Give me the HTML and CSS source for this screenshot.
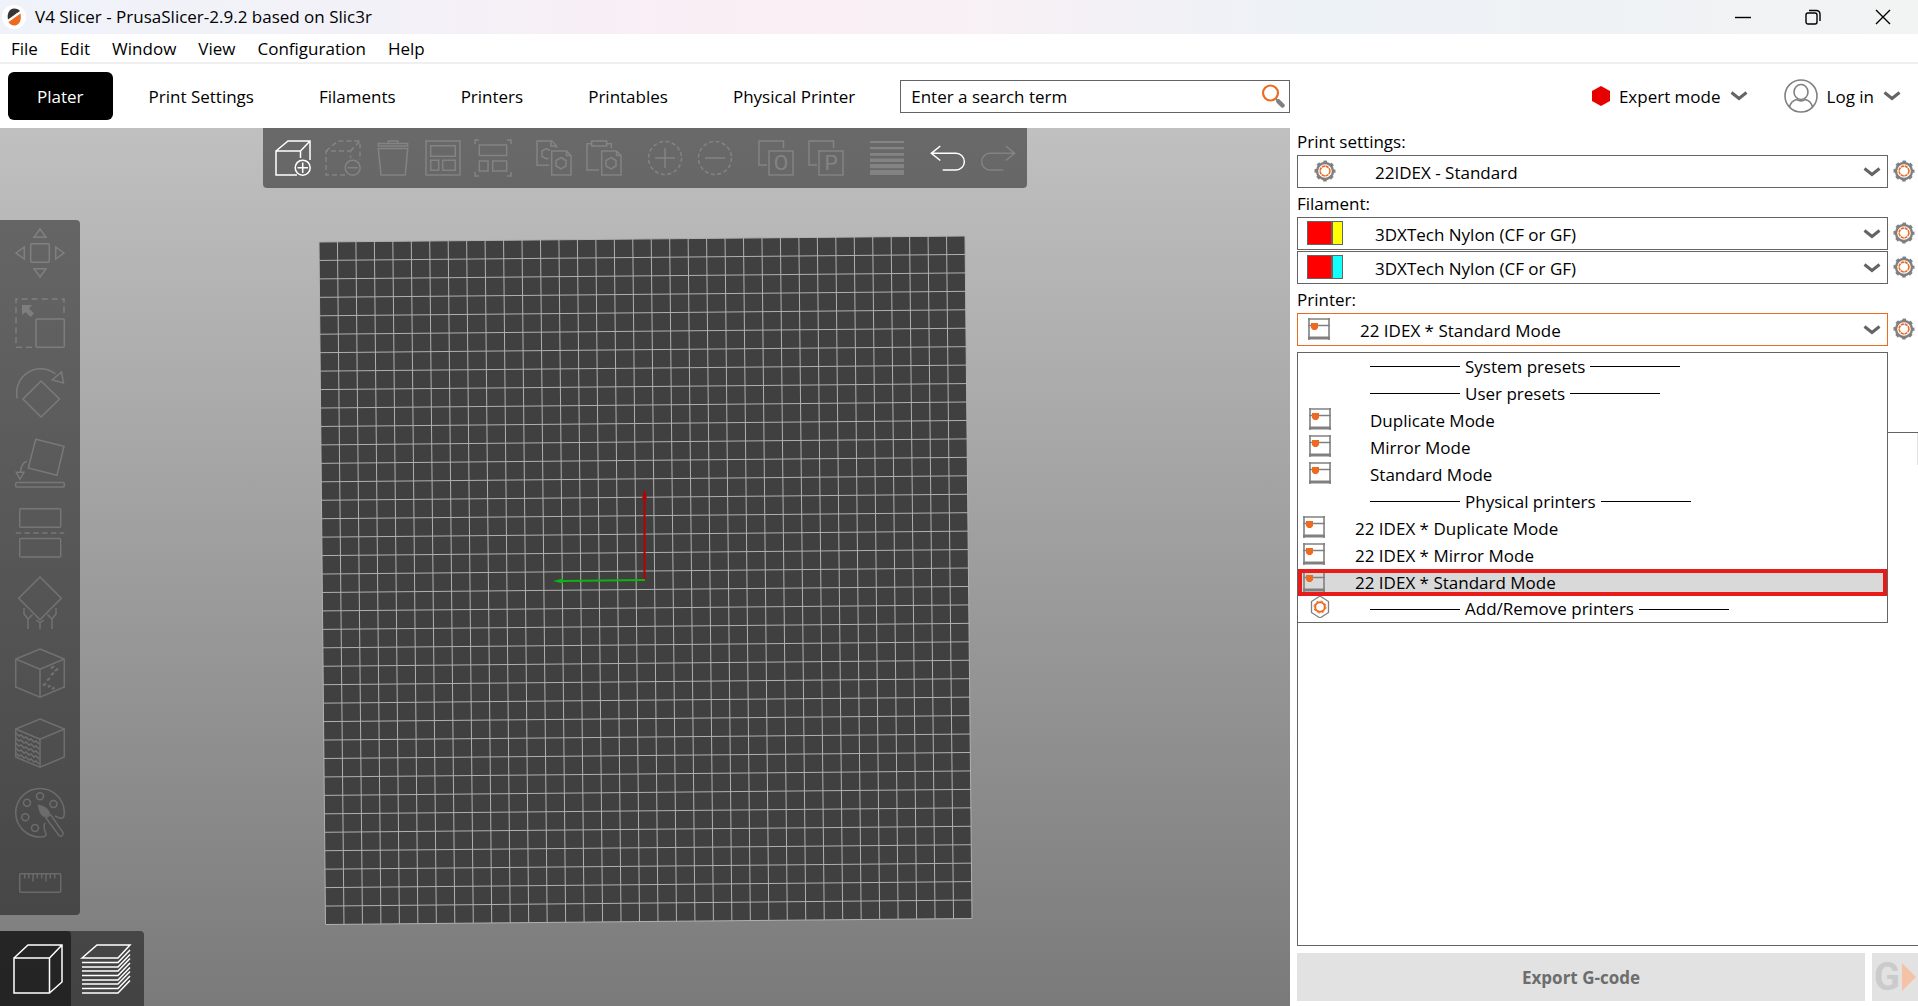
FILE: index.html
```html
<!DOCTYPE html>
<html lang="en">
<head>
    <meta charset="UTF-8">
    <meta name="viewport" content="width=device-width, initial-scale=1.0">
    <title>V4 Slicer - PrusaSlicer-2.9.2 based on Slic3r</title>
    <link rel="stylesheet" href="styles.css">
</head>
<body>
    <!-- shared icons -->
    <svg class="defs" width="0" height="0" aria-hidden="true">
        <symbol id="chevron" viewBox="0 0 18 10">
            <path d="M1.5 1.5L9 7.5L16.5 1.5" fill="none" stroke="#646464" stroke-width="3"/>
        </symbol>
        <symbol id="gear" viewBox="0 0 22 22">
            <circle cx="11" cy="11" r="8" fill="none" stroke="#808080" stroke-width="2.4"/>
            <circle cx="11" cy="11" r="9.3" fill="none" stroke="#808080" stroke-width="2.4" stroke-dasharray="3.6 3.7" stroke-dashoffset="1.8"/>
            <circle cx="11" cy="11" r="4.9" fill="none" stroke="#ed6b21" stroke-width="1.6" stroke-dasharray="3.2 .65"/>
        </symbol>
        <symbol id="printer" viewBox="0 0 22 22">
            <path d="M1 0V22M21 0V22M0 1H22M0 7.5H22" fill="none" stroke="#808080" stroke-width="1.6"/>
            <path d="M0 20H22" stroke="#808080" stroke-width="3"/>
            <path d="M3 5H10V10L8 12H5L3 10Z" fill="#ed6b21"/>
        </symbol>
        <symbol id="hexgear" viewBox="0 0 20 22">
            <path d="M10 0L18.500 5.500V16.500L10 22L1.500 16.500V5.500Z" fill="none" stroke="#808080" stroke-width="1.300"/>
            <circle cx="10" cy="11" r="4.8" fill="none" stroke="#ed6b21" stroke-width="2"/>
            <circle cx="10" cy="11" r="6" fill="none" stroke="#ed6b21" stroke-width="1" stroke-dasharray="2.300 2.400"/>
        </symbol>
    </svg>

    <header class="title-bar">
        <svg class="app-icon" viewBox="0 0 24 24">
            <circle cx="12" cy="12" r="12" fill="#fff"/>
            <path d="M6 14.500C4.500 8 8 3.500 12 3.500C15 3.500 17 4.500 18 6Z" fill="#363636"/>
            <path d="M18.500 8.500C20 15 17 20.500 12.500 20.500C9.500 20.500 7.500 19 6.500 17Z" fill="#ed6b21"/>
            <path d="M9 15L15.500 8" stroke="#fff" stroke-width="1"/>
        </svg>
        <h1>V4 Slicer - PrusaSlicer-2.9.2 based on Slic3r</h1>
        <div class="window-buttons">
            <button aria-label="Minimize"><svg viewBox="0 0 16 16"><path d="M0 8.500H16"/></svg></button>
            <button aria-label="Restore"><svg viewBox="0 0 16 16"><rect x="1" y="4" width="11" height="11" rx="2"/><path d="M4 1.500H11.500A3.500 3.500 0 0 1 15 5V12"/></svg></button>
            <button aria-label="Close"><svg viewBox="0 0 16 16"><path d="M1 1L15 15M15 1L1 15"/></svg></button>
        </div>
    </header>

    <nav class="menu-bar">
        <button>File</button>
        <button>Edit</button>
        <button>Window</button>
        <button>View</button>
        <button>Configuration</button>
        <button>Help</button>
    </nav>

    <div class="top-bar">
        <div class="top-left">
            <nav class="tabs">
                <button class="active">Plater</button>
                <button>Print Settings</button>
                <button>Filaments</button>
                <button>Printers</button>
                <button>Printables</button>
                <button>Physical Printer</button>
            </nav>
            <div class="search">
                <input type="text" aria-label="Search" placeholder="Enter a search term">
                <svg viewBox="0 0 24 26">
                    <circle cx="9.500" cy="10" r="7.500" fill="none" stroke="#ed6b21" stroke-width="2.200"/>
                    <path d="M15 16L17.500 18.500" stroke="#808080" stroke-width="2"/>
                    <path d="M17.500 18.500L21.500 22.500" stroke="#808080" stroke-width="4.500" stroke-linecap="round"/>
                </svg>
            </div>
        </div>
        <div class="top-right">
            <button class="mode">
                <svg class="hexagon" viewBox="0 0 18 20"><path d="M9 0L18 5V15L9 20L0 15V5Z" fill="#e70000"/></svg>
                <span>Expert mode</span>
                <svg class="chevron"><use href="#chevron"/></svg>
            </button>
            <button class="login">
                <svg class="user" viewBox="0 0 34 34" fill="none" stroke="#808080" stroke-width="1.600">
                    <circle cx="17" cy="17" r="16"/>
                    <ellipse cx="17" cy="13" rx="7" ry="7.500"/>
                    <path d="M5.500 28C6.500 23.500 9.500 21.500 12.500 20.500C15 22 19 22 21.500 20.500C24.500 21.500 27.500 23.500 28.500 28"/>
                </svg>
                <span>Log in</span>
                <svg class="chevron"><use href="#chevron"/></svg>
            </button>
        </div>
    </div>

    <main>
        <section class="viewport">
            <svg class="bed" viewBox="0 0 1290 878">
                <path d="M319 114L965 108L972 790.500L325.500 796.500Z" fill="#404040"/>
                <g id="grid" stroke="#b0b0b0" stroke-width="1"></g>
                <path d="M644.500 452V370" stroke="#b80000" stroke-width="2"/>
                <path d="M644.500 361L647 371H642Z" fill="#b80000"/>
                <path d="M645 452L562 453" stroke="#0fb40f" stroke-width="2"/>
                <path d="M553 453L563 450.500V455.500Z" fill="#0fb40f"/>
            </svg>

            <div class="toolbar">
                <div class="group">
                    <button class="on" aria-label="Add"><svg viewBox="0 0 36 36"><path d="M22 35H1V11H25.500V18M1 11L13 1H35V20M25.500 11L35 1"/><circle cx="27.700" cy="27.700" r="7.500"/><path d="M22.500 27.700H33M27.700 22.500V33"/></svg></button>
                    <button aria-label="Delete"><svg viewBox="0 0 36 36"><path stroke-dasharray="5 3" d="M20 35H1V11H25.500V18M1 11L13 1H35V20M25.500 11L35 1"/><circle cx="27.700" cy="27.700" r="7.500"/><path d="M22.500 27.700H33"/></svg></button>
                    <button aria-label="Delete all"><svg viewBox="0 0 36 36"><path d="M3.300 3.500H32.700V6H3.300ZM13.300 3.500V1H22.700V3.500M3.300 8.500H32.700L30.300 35H6Z"/></svg></button>
                    <button aria-label="Arrange"><svg viewBox="0 0 36 36"><path d="M1 1H35V35H1ZM5.700 5.700H30.300V16.300H5.700ZM5.700 20.300H13.700V30.300H5.700ZM17.700 20.300H30.300V30.300H17.700Z"/></svg></button>
                    <button aria-label="Arrange bed"><svg viewBox="0 0 36 36"><path d="M0 4V0H4M32 0H36V4M36 32V36H32M4 36H0V32M4.300 5H31.700V15.500H4.300ZM4.300 21H13V31H4.300ZM17.700 21H31.700V31H17.700Z"/></svg></button>
                </div>
                <div class="group">
                    <button aria-label="Copy"><svg viewBox="0 0 36 36"><path d="M13 25.300H1V1H16L20.500 6V8M15 1V6H20M12.500 18L10.500 19L6 16.500V11L10.500 8.500L14 10.500M15.700 11H30.500L35 15.500V35H15.700ZM30.500 11V15.500H35M25 17.500L30 20.500V26L25 29L20 26V20.500Z"/></svg></button>
                    <button aria-label="Paste"><svg viewBox="0 0 36 36"><path d="M13 30H1V3.700H5.700M20.700 3.700H25.300V8M5.700 1H20.700V6H5.700ZM15.700 11H30.500L35 15.500V35H15.700ZM30.500 11V15.500H35M25 17.500L30 20.500V26L25 29L20 26V20.500Z"/></svg></button>
                </div>
                <div class="group">
                    <button aria-label="Add instance"><svg viewBox="0 0 36 36"><circle cx="18" cy="18" r="16.500" stroke-dasharray="4 2.480"/><path d="M8 18H28M18 8V28"/></svg></button>
                    <button aria-label="Remove instance"><svg viewBox="0 0 36 36"><circle cx="18" cy="18" r="16.500" stroke-dasharray="4 2.480"/><path d="M8 18H28"/></svg></button>
                </div>
                <div class="group">
                    <button aria-label="Split to objects"><svg viewBox="0 0 36 36"><path d="M9 25H1V1H25.500V8M11 11H35V35H11Z"/><text x="23" y="30">O</text></svg></button>
                    <button aria-label="Split to parts"><svg viewBox="0 0 36 36"><path d="M9 25H1V1H25.500V8M11 11H35V35H11Z"/><text x="23" y="30">P</text></svg></button>
                </div>
                <div class="group">
                    <button aria-label="Variable layer height"><svg viewBox="0 0 36 36"><path class="solid" d="M1 1H35V3H1ZM1 7H35V9.300H1ZM1 13H35V15.700H1ZM1 18.500H35V22H1ZM1 24H35V28.300H1ZM1 30H35V35H1Z"/></svg></button>
                </div>
                <div class="group">
                    <button class="on" aria-label="Undo"><svg viewBox="0 0 36 36"><path d="M10.300 6L1.300 13.300L10.300 20.500M1.300 13.300H26A8.300 8.300 0 0 1 26 30H12.700"/></svg></button>
                    <button aria-label="Redo"><svg viewBox="0 0 36 36"><path d="M25.700 6L34.700 13.300L25.700 20.500M34.700 13.300H10A8.300 8.300 0 0 0 10 30H23.300"/></svg></button>
                </div>
            </div>

            <div class="gizmos">
                <button aria-label="Move"><svg viewBox="0 0 50 50"><rect x="15.700" y="15.700" width="18.600" height="18.600" rx="1"/><path d="M25 1L31 9.300H19ZM25 49L31 40.700H19ZM1 25L9.300 19V31ZM49 25L40.700 19V31Z"/></svg></button>
                <button aria-label="Scale"><svg viewBox="0 0 50 50"><path stroke-dasharray="6 4" d="M17 49.300H1V1H49V18"/><rect x="21" y="21" width="28.300" height="28.300" rx="1"/><path class="solid" d="M7 7H17L14 10.500L19 15.500L15.500 19L10.500 14L7 17Z"/></svg></button>
                <button aria-label="Rotate"><svg viewBox="0 0 50 50"><path d="M2.300 30.500A24 24 0 0 1 40.500 6M46.500 4L37.300 12L48.500 15ZM26 13L44.500 31L26 49L8 31Z"/></svg></button>
                <button aria-label="Place on face"><svg viewBox="0 0 50 50"><path d="M20.700 1.300L49 8.300L42 37.300L13.300 30ZM11.700 23.300C8 24.500 6 28 5.500 34M1.300 34.300H9L5 41.300Z"/><rect x=".7" y="44.500" width="48.600" height="4.500" rx="1"/></svg></button>
                <button aria-label="Cut"><svg viewBox="0 0 50 50"><rect x="4.700" y=".7" width="41" height="18.600" rx="1"/><rect x="4.700" y="30.500" width="41" height="18.600" rx="1"/><path stroke-dasharray="5.500 3.300" d="M.7 25H49.300"/></svg></button>
                <button aria-label="Paint-on supports"><svg viewBox="0 0 50 50"><path d="M25 -1L46.300 20.300L25 41.700L3.700 20.300ZM13 51V41L9 36V30M13 41L17.500 36.500M37 51V41L41 36V30M37 41L32.500 36.500M25 51V45L21.500 42M25 45L28.500 42"/></svg></button>
                <button aria-label="Seam painting"><svg viewBox="0 0 50 50"><path d="M25 1L49.300 11V39L25 49.300L.7 39V11ZM.7 11L25 21.300L49.300 11M25 21.300V49"/><path stroke-width="2.200" d="M36 20.500L39 18M40 23L43 20.500M36 27L39 25M32 32.500L35 30M28 37.500L31 35.500M33 39L35.500 37.500M37 41L39.500 39.500"/></svg></button>
                <button aria-label="Fuzzy skin"><svg viewBox="0 0 50 50"><path d="M25 1L49.300 11V39L25 49.300L.7 39V11ZM.7 11L25 21.300L49.300 11M25 21.300V49"/><path d="M1 15l3 3l2-1l3 3l2-1l3 3l2-1l3 3l2-1l3 3M1 20l3 3l2-1l3 3l2-1l3 3l2-1l3 3l2-1l3 3M1 25l3 3l2-1l3 3l2-1l3 3l2-1l3 3l2-1l3 3M1 30l3 3l2-1l3 3l2-1l3 3l2-1l3 3l2-1l3 3M1 35l3 3l2-1l3 3l2-1l3 3l2-1l3 3l2-1l3 3"/></svg></button>
                <button aria-label="Multimaterial painting"><svg viewBox="0 0 50 50"><path d="M30 35C27 39 31 44 31 46.500C31 48.500 28 49 25 49A24.300 24.300 0 1 1 49.300 25C49.300 32 46 31 40 28"/><circle cx="25" cy="8.300" r="3.500"/><circle cx="12" cy="14.700" r="3.500"/><circle cx="38.500" cy="16" r="3.500"/><circle cx="10.300" cy="29.300" r="3.500"/><circle cx="20" cy="40" r="3.500"/><path class="solid" d="M22.700 16.500C29 18 34 20 35 26L30.500 29.500C25 28 24 23 22.700 16.500Z"/><path d="M31 30L35.500 26.500L48 44.500C49 47 46 49.500 44 47.500Z"/></svg></button>
                <button aria-label="Measure"><svg viewBox="0 0 50 50"><rect x="4.700" y="15.700" width="41" height="18.600" rx="1"/><path d="M9.700 16V20.500M13.700 16V20.500M18 16V23.500M22.300 16V20.500M26.700 16V20.500M31 16V23.500M35.300 16V20.500M39.700 16V20.500"/></svg></button>
            </div>

            <div class="view-switch">
                <button class="active" aria-label="3D editor view"><svg viewBox="0 0 50 50"><path d="M1 14H36.500V49H1ZM1 14L15 1H49V38L36.500 49M36.500 14L49 1"/></svg></button>
                <button aria-label="Preview"><svg viewBox="0 0 50 50"><path d="M1 14L16 1H49L37 14ZM1 18.500H37L49 6M1 23H37L49 10.500M1 27H37L49 14.500M1 31.500H37L49 19M1 36H37L49 23.500M1 40H37L49 27.500M1 44.500H37L49 32M1 49H37L49 36.500"/></svg></button>
            </div>
        </section>

        <aside class="sidebar">
            <label for="print">Print settings:</label>
            <div class="preset">
                <div class="combo">
                    <span class="combo-icon centered"><svg class="gear"><use href="#gear"/></svg></span>
                    <select id="print"><option>22IDEX - Standard</option></select>
                    <svg class="chevron"><use href="#chevron"/></svg>
                </div>
                <button class="edit" aria-label="Edit print settings"><svg class="gear"><use href="#gear"/></svg></button>
            </div>

            <label for="filament1">Filament:</label>
            <div class="preset">
                <div class="combo">
                    <span class="combo-icon"><span class="swatch yellow"></span></span>
                    <select id="filament1"><option>3DXTech Nylon (CF or GF)</option></select>
                    <svg class="chevron"><use href="#chevron"/></svg>
                </div>
                <button class="edit" aria-label="Edit filament 1"><svg class="gear"><use href="#gear"/></svg></button>
            </div>
            <div class="preset second">
                <div class="combo">
                    <span class="combo-icon"><span class="swatch cyan"></span></span>
                    <select aria-label="Filament 2"><option>3DXTech Nylon (CF or GF)</option></select>
                    <svg class="chevron"><use href="#chevron"/></svg>
                </div>
                <button class="edit" aria-label="Edit filament 2"><svg class="gear"><use href="#gear"/></svg></button>
            </div>

            <label for="printer-select">Printer:</label>
            <div class="preset">
                <div class="combo open">
                    <span class="combo-icon narrow"><svg class="printer"><use href="#printer"/></svg></span>
                    <select id="printer-select"><option>22 IDEX * Standard Mode</option></select>
                    <svg class="chevron"><use href="#chevron"/></svg>
                    <div class="dropdown">
                        <div class="separator">System presets</div>
                        <div class="separator">User presets</div>
                        <button><svg class="printer"><use href="#printer"/></svg>Duplicate Mode</button>
                        <button><svg class="printer"><use href="#printer"/></svg>Mirror Mode</button>
                        <button><svg class="printer"><use href="#printer"/></svg>Standard Mode</button>
                        <div class="separator">Physical printers</div>
                        <button class="physical"><svg class="printer"><use href="#printer"/></svg>22 IDEX * Duplicate Mode</button>
                        <button class="physical"><svg class="printer"><use href="#printer"/></svg>22 IDEX * Mirror Mode</button>
                        <button class="physical selected"><svg class="printer"><use href="#printer"/></svg>22 IDEX * Standard Mode</button>
                        <button class="separator with-icon"><svg class="printer"><use href="#hexgear"/></svg>Add/Remove printers</button>
                    </div>
                </div>
                <button class="edit" aria-label="Edit printer"><svg class="gear"><use href="#gear"/></svg></button>
            </div>

            <div class="object-list"><div class="scroll-edge"></div></div>

            <div class="actions">
                <button class="export" disabled>Export G-code</button>
                <button class="send" disabled aria-label="Send G-code">
                    <span>G</span>
                    <svg viewBox="0 0 14 28"><path d="M0 0L14 14L0 28Z" fill="#f6c2a7"/></svg>
                </button>
            </div>
        </aside>
    </main>

    <script>
        // Print bed grid, 350 x 370 mm with a line every 10 mm
        const corners = { tl: [319, 114], tr: [965, 108], br: [972, 790.5], bl: [325.5, 796.5] };
        const grid = document.getElementById('grid');

        function between(a, b, t) {
            return [a[0] + (b[0] - a[0]) * t, a[1] + (b[1] - a[1]) * t];
        }

        function addLine(p, q) {
            const line = document.createElementNS('http://www.w3.org/2000/svg', 'line');
            line.setAttribute('x1', p[0]);
            line.setAttribute('y1', p[1]);
            line.setAttribute('x2', q[0]);
            line.setAttribute('y2', q[1]);
            grid.appendChild(line);
        }

        for (let i = 0; i <= 35; i++) {
            addLine(between(corners.tl, corners.tr, i / 35), between(corners.bl, corners.br, i / 35));
        }
        for (let i = 0; i <= 37; i++) {
            addLine(between(corners.tl, corners.bl, i / 37), between(corners.tr, corners.br, i / 37));
        }
    </script>
</body>
</html>
```

FILE: styles.css
```css
* {
    box-sizing: border-box;
}

body {
    font-family: "Open Sans", "Segoe UI", sans-serif;
    font-size: 17px;
    line-height: 24px;
    color: #000;
    background-color: #fff;
    display: flex;
    flex-direction: column;
    height: 100vh;
    margin: 0;
    overflow: hidden;
}

button, input, select {
    font: inherit;
    color: inherit;
    background: none;
    border: none;
    padding: 0;
    margin: 0;
}

svg {
    display: block;
    flex: none;
}

.defs {
    position: absolute;
}

.chevron {
    width: 18px;
    height: 10px;
}

.gear, .printer {
    width: 22px;
    height: 22px;
}

/* Title bar */
.title-bar {
    display: flex;
    align-items: center;
    height: 34px;
    padding-left: 2px;
    background: linear-gradient(90deg, #eff3f9 0%, #f3f1f8 20%, #faeef5 36%, #f8f0f4 50%, #edf2f7 68%, #f2f3f3 100%);
}

.app-icon {
    width: 24px;
    height: 24px;
}

h1 {
    flex: 1;
    margin: 0 0 0 9px;
    font-size: 17px;
    font-weight: normal;
}

.window-buttons {
    display: flex;
}

.window-buttons button {
    display: flex;
    align-items: center;
    justify-content: center;
    width: 70px;
    height: 34px;
}

.window-buttons svg {
    width: 16px;
    height: 16px;
    fill: none;
    stroke: #000;
    stroke-width: 1.4;
}

/* Menu */
.menu-bar {
    display: flex;
    height: 30px;
    padding-top: 2px;
    border-bottom: 2px solid #f0f0f0;
}

.menu-bar button {
    padding: 0 11px;
}

/* Tabs and search */
.top-bar {
    display: flex;
    height: 64px;
}

.top-left {
    display: flex;
    flex: 1;
    align-items: center;
    padding-left: 8px;
}

.tabs {
    display: flex;
    gap: 7px;
}

.tabs button {
    height: 48px;
    padding: 2px 29px 0;
    border-radius: 6px;
}

.tabs .active {
    background-color: #000;
    color: #fff;
}

.search {
    display: flex;
    flex: 1;
    align-items: center;
    height: 33px;
    margin-left: 16px;
    padding: 0 4px 0 10px;
    border: 1px solid #646464;
}

.search input {
    flex: 1;
    min-width: 0;
    padding-top: 2px;
    outline: none;
}

.search input::placeholder {
    color: #000;
    opacity: 1;
}

.search svg {
    width: 24px;
    height: 26px;
}

.top-right {
    display: flex;
    align-items: center;
    justify-content: flex-end;
    gap: 36px;
    width: 628px;
    padding-right: 17px;
}

.mode, .login {
    display: flex;
    align-items: center;
    gap: 9px;
}

.mode span, .login span {
    padding-top: 2px;
}

.hexagon {
    width: 18px;
    height: 20px;
}

.user {
    width: 34px;
    height: 34px;
}

/* 3D view */
main {
    display: flex;
    flex: 1;
    min-height: 0;
}

.viewport {
    position: relative;
    flex: 1;
    min-width: 0;
    background: linear-gradient(#c0c0c0, #7a7a7a);
}

.bed {
    position: absolute;
    width: 100%;
    height: 100%;
}

.toolbar, .gizmos, .view-switch {
    position: absolute;
    display: flex;
    background-color: rgba(0, 0, 0, 0.45);
}

.toolbar svg, .gizmos svg, .view-switch svg {
    fill: none;
    stroke: #fff;
    stroke-width: 1.5;
    overflow: visible;
}

.toolbar svg, .gizmos svg {
    opacity: 0.18;
}

.toolbar .on svg {
    opacity: 1;
}

.viewport .solid {
    fill: #fff;
    stroke: none;
}

.toolbar {
    top: 0;
    left: 50%;
    transform: translateX(-50%);
    gap: 11px;
    height: 60px;
    padding: 0 4px 0 5px;
    border-radius: 0 0 4px 4px;
}

.group {
    display: flex;
    align-items: center;
}

.toolbar button {
    width: 50px;
    padding: 0 7px;
}

.toolbar svg {
    width: 36px;
    height: 36px;
}

.toolbar text {
    font-size: 21px;
    font-family: Roboto, sans-serif;
    text-anchor: middle;
    fill: #fff;
    stroke: none;
}

.gizmos {
    top: 92px;
    left: 0;
    flex-direction: column;
    align-items: center;
    gap: 20px;
    width: 80px;
    padding: 8px 0 7px;
    border-radius: 0 4px 4px 0;
}

.gizmos svg {
    width: 50px;
    height: 50px;
}

.view-switch {
    bottom: 0;
    left: 0;
    border-radius: 0 4px 0 0;
}

.view-switch button {
    height: 75px;
    padding: 0 13px 0 10px;
}

.view-switch .active {
    padding: 0 8px 0 13px;
    background-color: rgba(0, 0, 0, 0.46);
    border-radius: 0 4px 0 0;
}

.view-switch svg {
    width: 50px;
    height: 50px;
}

/* Sidebar */
.sidebar {
    display: flex;
    flex-direction: column;
    width: 628px;
    padding: 0 0 5px 7px;
}

.sidebar label {
    height: 29px;
    line-height: 31px;
}

.sidebar label:first-child {
    height: 27px;
    line-height: 28px;
}

.preset {
    display: flex;
}

.second {
    margin-top: 1px;
}

.combo {
    position: relative;
    display: flex;
    flex: 1;
    align-items: center;
    height: 33px;
    padding-right: 6px;
    border: 1px solid #646464;
}

.combo.open {
    border-color: #ed6b21;
}

.combo select {
    flex: 1;
    padding-top: 2px;
    appearance: none;
    outline: none;
}

.combo-icon {
    width: 77px;
    padding: 0 0 2px 9px;
}

.combo-icon.centered {
    padding-left: 16px;
}

.combo-icon.narrow {
    width: 62px;
    padding-left: 10px;
}

.swatch {
    display: block;
    width: 36px;
    height: 24px;
    border: 1px solid #646464;
}

.swatch.yellow {
    background: linear-gradient(90deg, #f00 23px, #646464 23px, #646464 25px, #ff0 25px);
}

.swatch.cyan {
    background: linear-gradient(90deg, #f00 23px, #646464 23px, #646464 25px, #1ff 25px);
}

.edit {
    display: flex;
    align-items: center;
    justify-content: center;
    width: 30px;
    padding: 0 0 2px 1px;
}

.dropdown {
    position: absolute;
    top: 38px;
    left: -1px;
    right: -1px;
    z-index: 1;
    border: 1px solid #646464;
    background-color: #fff;
}

.dropdown button, .separator {
    display: flex;
    align-items: center;
    gap: 39px;
    width: 100%;
    height: 27px;
    padding-left: 11px;
    text-align: left;
}

.dropdown .printer {
    margin-bottom: 4px;
}

.dropdown .separator {
    gap: 5px;
    padding-left: 72px;
}

.separator::before, .separator::after {
    content: "";
    width: 90px;
    height: 1px;
    background-color: #000;
}

.dropdown .with-icon {
    height: 26px;
    padding-left: 11px;
}

.with-icon svg {
    margin-right: 34px;
    order: -1;
}

.dropdown .physical {
    gap: 30px;
    padding-left: 5px;
}

.dropdown .selected {
    background-color: #d9d9d9;
    outline: 4px solid #e81b1b;
    outline-offset: -4px;
}

.object-list {
    display: flex;
    justify-content: flex-end;
    flex: 1;
    margin-top: 86px;
    border: 1px solid #646464;
    border-right: none;
}

.scroll-edge {
    width: 1px;
    height: 32px;
    background-color: #e1e1e1;
}

.actions {
    display: flex;
    gap: 7px;
    margin-top: 7px;
}

.actions button {
    height: 48px;
    background-color: #e2e2e2;
}

.actions .export {
    flex: 1;
    padding-top: 2px;
    font-weight: bold;
    color: #6d6d6d;
}

.send {
    display: flex;
    align-items: center;
    justify-content: center;
    gap: 2px;
    width: 46px;
    font-family: Roboto, sans-serif;
    font-size: 38px;
    font-weight: bold;
    line-height: 48px;
    color: #cbcbcb;
}

.send svg {
    width: 14px;
    height: 28px;
}
```
